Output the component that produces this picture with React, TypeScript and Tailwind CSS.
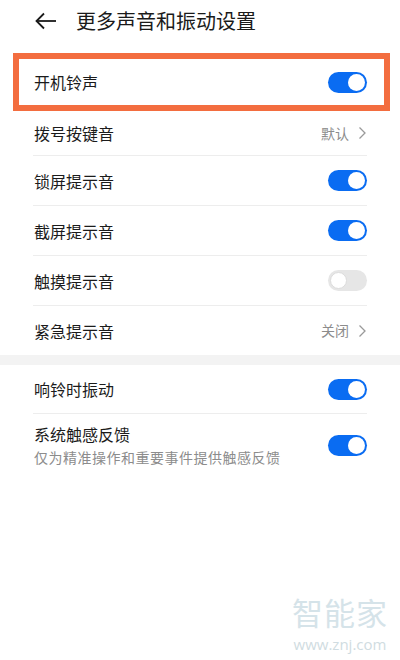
import React from 'react';

const font = { fontFamily: '"Noto Sans CJK SC", "Noto Sans", sans-serif' };

const Toggle: React.FC<{ on: boolean }> = ({ on }) => (
    <div
        className={`w-[39px] h-[21px] rounded-full flex items-center p-[2px] ${
            on ? 'bg-[#0a6cf2] justify-end' : 'bg-[#e6e6e6] justify-start'
        }`}
    >
        <div className={`w-[17px] h-[17px] rounded-full bg-white ${on ? '' : 'border border-[#dcdcdc]'}`} />
    </div>
);

const Chevron = () => (
    <svg width="9" height="14" viewBox="0 0 9 14" className="ml-[9px]">
        <polyline points="1.5,1.5 7,7 1.5,12.5" fill="none" stroke="#9a9a9a" strokeWidth="1.3" />
    </svg>
);

const Row: React.FC<{ label: string; h: string; last?: boolean; children: React.ReactNode }> = ({
    label,
    h,
    last,
    children,
}) => (
    <div className={`flex items-center justify-between ${h} ${last ? '' : 'border-b border-[#ededed]'}`}>
        <span className="text-[16px] text-[#1b1b1b] pl-[1px]">{label}</span>
        {children}
    </div>
);

const Value: React.FC<{ text: string }> = ({ text }) => (
    <div className="flex items-center">
        <span className="text-[14px] text-[#8c8c8c]">{text}</span>
        <Chevron />
    </div>
);

export default function App() {
    return (
        <div className="relative w-[400px] h-[660px] bg-white overflow-hidden" style={font}>
            {/* header */}
            <div className="flex items-center h-[42px] pl-[35px]">
                <svg width="22" height="18" viewBox="0 0 22 18">
                    <polyline points="9,1.5 1.5,9 9,16.5" fill="none" stroke="#1a1a1a" strokeWidth="1.8" />
                    <line x1="1.5" y1="9" x2="21" y2="9" stroke="#1a1a1a" strokeWidth="1.8" />
                </svg>
                <span className="ml-[19px] text-[20px] text-[#1a1a1a] leading-none">更多声音和振动设置</span>
            </div>

            {/* highlighted row */}
            <div className="mt-[11px] ml-[13px] w-[377px] h-[58px] border-[6px] border-[#f36d3f] flex items-center justify-between pl-[15px] pr-[17px]">
                <span className="text-[16px] text-[#1b1b1b]">开机铃声</span>
                <Toggle on />
            </div>

            <div className="mx-[33px]">
                <Row label="拨号按键音" h="h-[45px]">
                    <Value text="默认" />
                </Row>
                <Row label="锁屏提示音" h="h-[50px]">
                    <Toggle on />
                </Row>
                <Row label="截屏提示音" h="h-[50px]">
                    <Toggle on />
                </Row>
                <Row label="触摸提示音" h="h-[50px]">
                    <Toggle on={false} />
                </Row>
                <Row label="紧急提示音" h="h-[49px]" last>
                    <Value text="关闭" />
                </Row>
            </div>

            <div className="h-[10px] bg-[#f3f3f3]" />

            <div className="mx-[33px]">
                <Row label="响铃时振动" h="h-[49px]">
                    <Toggle on />
                </Row>
                <div className="flex items-center justify-between pt-[8px] pb-[10px]">
                    <div className="flex flex-col pl-[1px]">
                        <span className="text-[16px] text-[#1b1b1b] leading-[24px]">系统触感反馈</span>
                        <span className="text-[14px] text-[#8c8c8c] leading-[22px] tracking-[0.5px]">
                            仅为精准操作和重要事件提供触感反馈
                        </span>
                    </div>
                    <Toggle on />
                </div>
            </div>

            {/* watermark */}
            <div className="absolute right-[12px] bottom-[8px] flex flex-col items-center gap-[10px]">
                <span className="text-[31px] leading-[31px] text-[#d5e3e9] tracking-[1px]">智能家</span>
                <span
                    className="text-[15px] leading-[15px] text-[#d0dce1]"
                    style={{ fontFamily: '"Open Sans", sans-serif' }}
                >
                    www.znj.com
                </span>
            </div>
        </div>
    );
}
